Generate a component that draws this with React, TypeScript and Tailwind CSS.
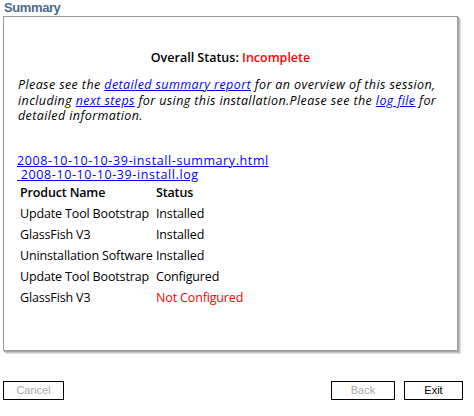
const products = [
  { name: 'Update Tool Bootstrap', status: 'Installed' },
  { name: 'GlassFish V3', status: 'Installed' },
  { name: 'Uninstallation Software', status: 'Installed' },
  { name: 'Update Tool Bootstrap', status: 'Configured' },
  { name: 'GlassFish V3', status: 'Not Configured', bad: true },
];

export default function App() {
  return (
    <div className="w-[474px] h-[416px] bg-white flex flex-col font-['Liberation_Sans',sans-serif]">
      <div className="pl-[4px] pt-[1px] h-[16px] text-[13px] leading-[14px] font-bold tracking-[-0.4px] text-[#4a6b8a]">Summary</div>
      <div className="ml-[3px] w-[455px] h-[335px] border border-[#999] bg-white shadow-[1px_1px_0_#aaa,2px_2px_0_#c4c4c4,3px_3px_0_#dcdcdc] font-['Open_Sans',sans-serif] text-[12.5px] text-black">
        <div className="pt-[33px] text-center font-semibold leading-[16px]">
          Overall Status: <span className="text-[#ff0000]">Incomplete</span>
        </div>
        <p className="mt-[11px] px-[14px] italic leading-[15.5px] whitespace-nowrap tracking-[0.4px]">
          Please see the <a className="text-[#0000ff] underline">detailed summary report</a> for an overview of this session,
          <br />
          including <a className="text-[#0000ff] underline">next steps</a> for using this installation.Please see the{' '}
          <a className="text-[#0000ff] underline">log file</a> for
          <br />
          detailed information.
        </p>
        <div className="mt-[30px] px-[13px] leading-[14px] text-[#0000ff] underline tracking-[0.6px]">
          <div>2008-10-10-10-39-install-summary.html</div>
          <div>&nbsp;2008-10-10-10-39-install.log</div>
        </div>
        <div className="mt-[1px] pl-[16px] grid grid-cols-[136px_1fr] auto-rows-[21px] items-center whitespace-nowrap tracking-[-0.15px]">
          <div className="font-semibold">Product Name</div>
          <div className="font-semibold">Status</div>
          {products.map((p, i) => (
            <div key={i} className="contents">
              <div>{p.name}</div>
              <div className={p.bad ? 'text-[#ff0000]' : ''}>{p.status}</div>
            </div>
          ))}
        </div>
      </div>
      <div className="mt-[30px] flex pl-[3px] pr-[11px] text-[11px]">
        <button className="w-[61px] h-[19px] border border-black text-[#a8a8a8] bg-white">Cancel</button>
        <div className="flex-1" />
        <button className="w-[64px] h-[19px] border border-black text-[#a8a8a8] bg-white">Back</button>
        <button className="ml-[9px] w-[59px] h-[19px] border border-black text-black bg-white">Exit</button>
      </div>
    </div>
  );
}
